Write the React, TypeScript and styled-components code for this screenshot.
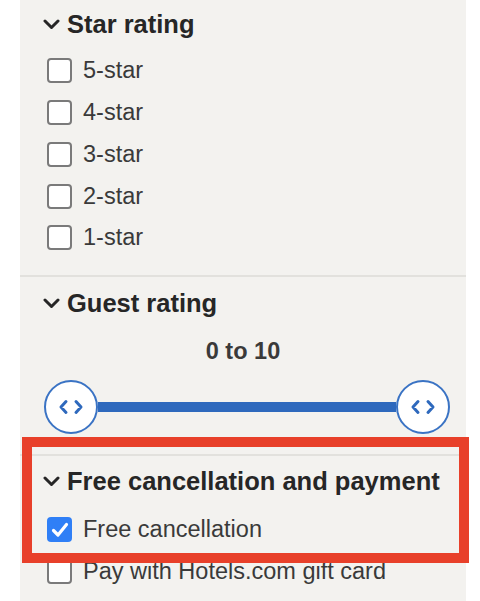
import React from "react";
import styled, { createGlobalStyle } from "styled-components";

const Global = createGlobalStyle`
  html, body { margin: 0; padding: 0; background: #ffffff; }
  body { font-family: "Liberation Sans", Arial, Helvetica, sans-serif; }
`;

const Page = styled.div`
  position: relative;
  width: 480px;
  height: 601px;
  overflow: hidden;
  background: #ffffff;
`;

const Panel = styled.div`
  margin-left: 20px;
  width: 446px;
  min-height: 601px;
  background: #f3f2ef;
  display: flex;
  flex-direction: column;
`;

const Section = styled.section<{ $pt: number; $pb: number }>`
  padding: ${(p) => p.$pt}px 0 ${(p) => p.$pb}px 0;
  border-bottom: 2px solid #e2e1dd;
  display: flex;
  flex-direction: column;
  &:last-child { border-bottom: none; }
`;

const Heading = styled.h3`
  margin: 0;
  padding-left: 23px;
  height: 30px;
  display: flex;
  align-items: center;
  gap: 7px;
  font-size: 25.5px;
  font-weight: 700;
  color: #262626;
  letter-spacing: 0;
`;

const List = styled.div<{ $mt: number }>`
  margin-top: ${(p) => p.$mt}px;
  display: flex;
  flex-direction: column;
`;

const Row = styled.label`
  height: 41.75px;
  display: flex;
  align-items: center;
  gap: 11px;
  padding-left: 27px;
  font-size: 23.5px;
  color: #3a3a3a;
`;

const Box = styled.span<{ $checked?: boolean }>`
  box-sizing: border-box;
  width: 25px;
  height: 25px;
  border-radius: 4px;
  border: ${(p) => (p.$checked ? "none" : "2px solid #7a7a7a")};
  background: ${(p) => (p.$checked ? "#2f7ff6" : "#ffffff")};
  display: flex;
  align-items: center;
  justify-content: center;
  flex-shrink: 0;
`;

const Value = styled.div`
  margin-top: 18px;
  height: 30px;
  display: flex;
  align-items: center;
  justify-content: center;
  font-size: 23.5px;
  font-weight: 700;
  color: #3a3a3a;
`;

const Slider = styled.div`
  margin: 13px 0 0 24px;
  width: 406px;
  height: 54px;
  display: flex;
  align-items: center;
`;

const Track = styled.div`
  flex: 1;
  height: 10px;
  background: #2e69bd;
`;

const Thumb = styled.div`
  box-sizing: border-box;
  width: 54px;
  height: 54px;
  border-radius: 50%;
  border: 2px solid #3a73c4;
  background: #ffffff;
  display: flex;
  align-items: center;
  justify-content: center;
  flex-shrink: 0;
`;

const Highlight = styled.div`
  position: absolute;
  left: 22px;
  top: 437px;
  width: 447px;
  height: 126px;
  box-sizing: border-box;
  border: 10px solid #e8402a;
  pointer-events: none;
`;

const Chevron = () => (
  <svg width="17" height="11" viewBox="0 0 17 11">
    <path d="M2 2 L8.5 8.5 L15 2" fill="none" stroke="#262626" strokeWidth="3" strokeLinecap="round" strokeLinejoin="round" />
  </svg>
);

const Check = () => (
  <svg width="18" height="16" viewBox="0 0 18 16">
    <path d="M2.5 8.5 L7 13 L15.5 2.5" fill="none" stroke="#ffffff" strokeWidth="3.2" strokeLinecap="round" strokeLinejoin="round" />
  </svg>
);

const Arrows = () => (
  <svg width="26" height="16" viewBox="0 0 26 16">
    <path d="M8 2.5 L3 8 L8 13.5 M18 2.5 L23 8 L18 13.5" fill="none" stroke="#2e69bd" strokeWidth="3" strokeLinecap="round" strokeLinejoin="round" />
  </svg>
);

const CheckRow = ({ label, checked }: { label: string; checked?: boolean }) => (
  <Row>
    <Box $checked={checked}>{checked && <Check />}</Box>
    <span>{label}</span>
  </Row>
);

export default function App() {
  return (
    <Page>
      <Global />
      <Panel>
        <Section $pt={9} $pb={16}>
          <Heading>
            <Chevron />
            Star rating
          </Heading>
          <List $mt={11}>
            {["5-star", "4-star", "3-star", "2-star", "1-star"].map((s) => (
              <CheckRow key={s} label={s} />
            ))}
          </List>
        </Section>
        <Section $pt={12} $pb={20}>
          <Heading>
            <Chevron />
            Guest rating
          </Heading>
          <Value>0 to 10</Value>
          <Slider>
            <Thumb>
              <Arrows />
            </Thumb>
            <Track />
            <Thumb>
              <Arrows />
            </Thumb>
          </Slider>
        </Section>
        <Section $pt={11} $pb={0}>
          <Heading>
            <Chevron />
            Free cancellation and payment
          </Heading>
          <List $mt={12}>
            <CheckRow label="Free cancellation" checked />
            <CheckRow label="Pay with Hotels.com gift card" />
          </List>
        </Section>
      </Panel>
      <Highlight />
    </Page>
  );
}
